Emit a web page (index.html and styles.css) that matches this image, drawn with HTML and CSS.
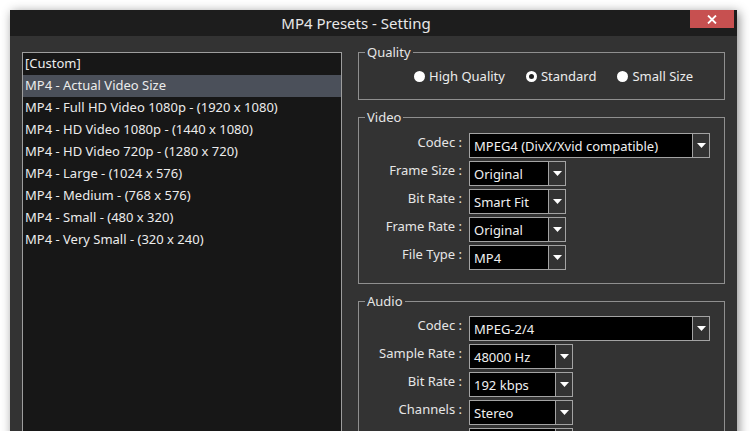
FILE: index.html
```html
<!DOCTYPE html>
<html>
<head>
<meta charset="utf-8">
<title>MP4 Presets - Setting</title>
<link rel="stylesheet" href="styles.css">
</head>
<body>
<div class="window">
  <div class="titlebar">
    <div class="title">MP4 Presets - Setting</div>
    <div class="close">
      <svg width="10" height="9" viewBox="0 0 10 9"><path d="M1 0.5 L9 8.5 M9 0.5 L1 8.5" stroke="#fff" stroke-width="1.8" fill="none"/></svg>
    </div>
  </div>
  <div class="content">
    <ul class="presets">
      <li>[Custom]</li>
      <li class="selected">MP4 - Actual Video Size</li>
      <li>MP4 - Full HD Video 1080p - (1920 x 1080)</li>
      <li>MP4 - HD Video 1080p - (1440 x 1080)</li>
      <li>MP4 - HD Video 720p - (1280 x 720)</li>
      <li>MP4 - Large - (1024 x 576)</li>
      <li>MP4 - Medium - (768 x 576)</li>
      <li>MP4 - Small - (480 x 320)</li>
      <li>MP4 - Very Small - (320 x 240)</li>
    </ul>
    <div class="settings">
      <fieldset class="group">
        <legend>Quality</legend>
        <div class="radios">
          <label class="radio"><span class="dot"></span>High Quality</label>
          <label class="radio checked"><span class="dot"></span>Standard</label>
          <label class="radio"><span class="dot"></span>Small Size</label>
        </div>
      </fieldset>
      <fieldset class="group video">
        <legend>Video</legend>
        <div class="form">
          <div class="row"><span class="label">Codec :</span><div class="select wide"><span class="value">MPEG4 (DivX/Xvid compatible)</span><span class="arrow"><svg width="9" height="5" viewBox="0 0 9 5"><path d="M0 0 H9 L4.5 5 Z" fill="#fff"/></svg></span></div></div>
          <div class="row"><span class="label">Frame Size :</span><div class="select short"><span class="value">Original</span><span class="arrow"><svg width="9" height="5" viewBox="0 0 9 5"><path d="M0 0 H9 L4.5 5 Z" fill="#fff"/></svg></span></div></div>
          <div class="row"><span class="label">Bit Rate :</span><div class="select short"><span class="value">Smart Fit</span><span class="arrow"><svg width="9" height="5" viewBox="0 0 9 5"><path d="M0 0 H9 L4.5 5 Z" fill="#fff"/></svg></span></div></div>
          <div class="row"><span class="label">Frame Rate :</span><div class="select short"><span class="value">Original</span><span class="arrow"><svg width="9" height="5" viewBox="0 0 9 5"><path d="M0 0 H9 L4.5 5 Z" fill="#fff"/></svg></span></div></div>
          <div class="row"><span class="label">File Type :</span><div class="select short"><span class="value">MP4</span><span class="arrow"><svg width="9" height="5" viewBox="0 0 9 5"><path d="M0 0 H9 L4.5 5 Z" fill="#fff"/></svg></span></div></div>
        </div>
      </fieldset>
      <fieldset class="group audio">
        <legend>Audio</legend>
        <div class="form">
          <div class="row"><span class="label">Codec :</span><div class="select wide"><span class="value">MPEG-2/4</span><span class="arrow"><svg width="9" height="5" viewBox="0 0 9 5"><path d="M0 0 H9 L4.5 5 Z" fill="#fff"/></svg></span></div></div>
          <div class="row"><span class="label">Sample Rate :</span><div class="select mid"><span class="value">48000 Hz</span><span class="arrow"><svg width="9" height="5" viewBox="0 0 9 5"><path d="M0 0 H9 L4.5 5 Z" fill="#fff"/></svg></span></div></div>
          <div class="row"><span class="label">Bit Rate :</span><div class="select mid"><span class="value">192 kbps</span><span class="arrow"><svg width="9" height="5" viewBox="0 0 9 5"><path d="M0 0 H9 L4.5 5 Z" fill="#fff"/></svg></span></div></div>
          <div class="row"><span class="label">Channels :</span><div class="select mid"><span class="value">Stereo</span><span class="arrow"><svg width="9" height="5" viewBox="0 0 9 5"><path d="M0 0 H9 L4.5 5 Z" fill="#fff"/></svg></span></div></div>
          <div class="row"><span class="label"></span><div class="select mid"><span class="value"></span><span class="arrow"><svg width="9" height="5" viewBox="0 0 9 5"><path d="M0 0 H9 L4.5 5 Z" fill="#fff"/></svg></span></div></div>
        </div>
      </fieldset>
    </div>
  </div>
</div>
</body>
</html>
```

FILE: styles.css
```css
html, body {
  margin: 0;
  padding: 0;
  background: #ffffff;
  overflow: hidden;
  height: 431px;
}

body {
  font-family: "Noto Sans", "Open Sans", sans-serif;
  font-size: 13px;
  color: #e6e6e6;
}

.window {
  margin: 10px 0 0 10px;
  width: 727px;
  height: 440px;
  background: #333333;
  box-shadow: 2px 2px 10px rgba(0, 0, 0, 0.45);
  display: flex;
  flex-direction: column;
}

.titlebar {
  height: 26px;
  background: #1d1d1d;
  display: flex;
  align-items: flex-start;
  flex-shrink: 0;
}

.title {
  flex: 1;
  text-align: center;
  padding-left: 12px;
  font-size: 15px;
  line-height: 27px;
  color: #e8e8e8;
}

.close {
  width: 44px;
  height: 18px;
  margin-right: 3px;
  background: #c75050;
  display: flex;
  align-items: center;
  justify-content: center;
}

.content {
  flex: 1;
  display: flex;
  gap: 16px;
  padding: 7px 12px 0 12px;
}

.presets {
  list-style: none;
  margin: 9px 0 0 0;
  padding: 0;
  width: 320px;
  flex-shrink: 0;
  box-sizing: border-box;
  border: 1px solid #9e9e9e;
  background: #171717;
}

.presets li {
  height: 22px;
  line-height: 21px;
  padding-left: 2px;
  white-space: nowrap;
  color: #ececec;
}

.presets li.selected {
  background: #4b505a;
}

.settings {
  flex: 1;
  min-width: 0;
  display: flex;
  flex-direction: column;
  gap: 8px;
}

.group {
  margin: 0;
  padding: 0;
  border: 1px solid #8f8f8f;
  min-width: 0;
}

.group legend {
  margin-left: 6px;
  padding: 0 2px;
  line-height: 18px;
  font-size: 13px;
  color: #e6e6e6;
}

.radios {
  display: flex;
  padding: 7px 0 14px 55px;
  line-height: 17px;
  white-space: nowrap;
}

.radio {
  display: flex;
  flex-shrink: 0;
  align-items: center;
  gap: 4px;
  color: #ececec;
  margin-right: 21px;
}

.dot {
  width: 11px;
  height: 11px;
  border-radius: 50%;
  background: #ffffff;
  box-sizing: border-box;
}

.radio.checked .dot {
  background: #222;
  border: 3px solid #ffffff;
}

.form {
  display: flex;
  flex-direction: column;
  gap: 3px;
}

.video .form {
  padding: 7px 0 13px 0;
}

.audio .form {
  padding: 6px 0 13px 0;
}

.row {
  display: flex;
  align-items: flex-start;
}

.label {
  width: 110px;
  flex-shrink: 0;
  box-sizing: border-box;
  padding-right: 7px;
  text-align: right;
  line-height: 18px;
  white-space: nowrap;
  color: #e6e6e6;
}

.select {
  display: flex;
  height: 25px;
  box-sizing: border-box;
  border: 1px solid #a3a3a3;
  background: #000000;
}

.select.wide { width: 241px; }
.select.short { width: 97px; }
.select.mid { width: 104px; }

.value {
  flex: 1;
  padding-left: 4px;
  line-height: 24px;
  color: #f0f0f0;
  white-space: nowrap;
  overflow: hidden;
}

.arrow {
  width: 16px;
  flex-shrink: 0;
  border-left: 1px solid #a3a3a3;
  background: #333333;
  display: flex;
  align-items: center;
  justify-content: center;
}
```
